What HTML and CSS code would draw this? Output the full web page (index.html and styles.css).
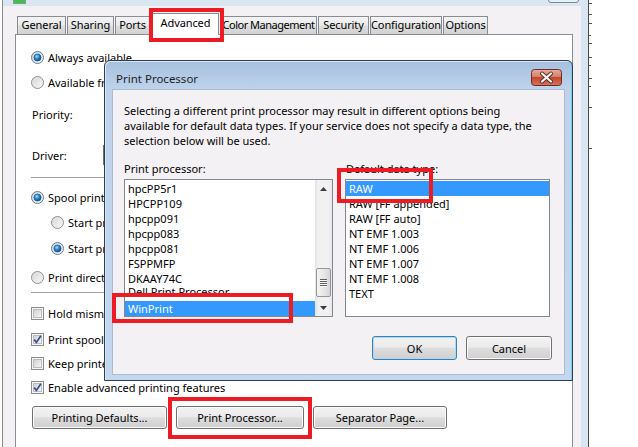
FILE: index.html
```html
<!DOCTYPE html>
<html lang="en">
<head>
<meta charset="utf-8">
<title>Printer Properties</title>
<link rel="stylesheet" href="styles.css">
</head>
<body>
<svg class="defs" width="0" height="0" aria-hidden="true">
  <defs>
    <linearGradient id="radioFill" x1="0" y1="0" x2="1" y2="1">
      <stop offset="0" stop-color="#d2d2d2"/>
      <stop offset="1" stop-color="#fcfcfc"/>
    </linearGradient>
    <radialGradient id="radioDot" cx="0.4" cy="0.35" r="0.7">
      <stop offset="0" stop-color="#9fe3ff"/>
      <stop offset="0.45" stop-color="#2a8ad4"/>
      <stop offset="1" stop-color="#0d3d73"/>
    </radialGradient>
    <linearGradient id="boxFill" x1="0" y1="0" x2="1" y2="1">
      <stop offset="0" stop-color="#cfcfcf"/>
      <stop offset="1" stop-color="#f7f7f7"/>
    </linearGradient>
    <linearGradient id="closeFill" x1="0" y1="0" x2="0" y2="1">
      <stop offset="0" stop-color="#e9ab9c"/>
      <stop offset="0.5" stop-color="#d27b66"/>
      <stop offset="0.5" stop-color="#c1472f"/>
      <stop offset="1" stop-color="#d8735a"/>
    </linearGradient>
    <symbol id="radio" viewBox="0 0 13 13">
      <circle cx="6.5" cy="6.5" r="6" fill="url(#radioFill)" stroke="#8c8e8f"/>
      <circle cx="6.5" cy="6.5" r="4.6" fill="none" stroke="#e8e8e8" stroke-width="0.8"/>
    </symbol>
    <symbol id="radio-on" viewBox="0 0 13 13">
      <circle cx="6.5" cy="6.5" r="6" fill="url(#radioFill)" stroke="#5c7c9c"/>
      <circle cx="6.5" cy="6.5" r="3.6" fill="url(#radioDot)" stroke="#174c80" stroke-width="0.6"/>
    </symbol>
    <symbol id="check" viewBox="0 0 13 13">
      <rect x="0.5" y="0.5" width="12" height="12" fill="#f5f5f5" stroke="#8e8f8f"/>
      <rect x="2.5" y="2.5" width="8" height="8" fill="url(#boxFill)" stroke="#bdbdbd"/>
    </symbol>
    <symbol id="check-on" viewBox="0 0 13 13">
      <rect x="0.5" y="0.5" width="12" height="12" fill="#f5f5f5" stroke="#8e8f8f"/>
      <rect x="2.5" y="2.5" width="8" height="8" fill="url(#boxFill)" stroke="#bdbdbd"/>
      <path d="M3.2 6.6 L5.4 9.4 L9.9 2.8" fill="none" stroke="#34508e" stroke-width="1.7"/>
    </symbol>
  </defs>
</svg>

<div class="screen">
  <div class="window">
    <div class="frame-top">
      <span class="app-icon"></span>
      <span class="close-edge"></span>
    </div>
    <div class="client">
      <div class="tabs">
        <div class="tab">General</div>
        <div class="tab">Sharing</div>
        <div class="tab">Ports</div>
        <div class="tab active">Advanced</div>
        <div class="tab">Color Management</div>
        <div class="tab">Security</div>
        <div class="tab">Configuration</div>
        <div class="tab">Options</div>
      </div>
      <div class="panel">
        <div class="row r-always"><svg class="ctl"><use href="#radio-on"/></svg><span>Always available</span></div>
        <div class="row r-from"><svg class="ctl"><use href="#radio"/></svg><span>Available from</span></div>
        <div class="row r-priority"><span class="field-label">Priority:</span></div>
        <div class="row r-driver"><span class="field-label">Driver:</span><span class="combo"></span></div>
        <div class="sep s-first"></div>
        <div class="row r-spool"><svg class="ctl"><use href="#radio-on"/></svg><span>Spool print documents so program finishes printing faster</span></div>
        <div class="row r-after sub"><svg class="ctl"><use href="#radio"/></svg><span>Start printing after last page is spooled</span></div>
        <div class="row r-now sub"><svg class="ctl"><use href="#radio-on"/></svg><span>Start printing immediately</span></div>
        <div class="row r-direct"><svg class="ctl"><use href="#radio"/></svg><span>Print directly to the printer</span></div>
        <div class="sep s-second"></div>
        <div class="row r-hold"><svg class="ctl"><use href="#check"/></svg><span>Hold mismatched documents</span></div>
        <div class="row r-first"><svg class="ctl"><use href="#check-on"/></svg><span>Print spooled documents first</span></div>
        <div class="row r-keep"><svg class="ctl"><use href="#check"/></svg><span>Keep printed documents</span></div>
        <div class="row r-enable"><svg class="ctl"><use href="#check-on"/></svg><span>Enable advanced printing features</span></div>
        <div class="panel-buttons">
          <button class="btn b-defaults">Printing Defaults...</button>
          <button class="btn b-processor">Print Processor...</button>
          <button class="btn b-separator">Separator Page...</button>
        </div>
      </div>
    </div>
  </div>
  <div class="ruler">
    <svg width="6" height="447" viewBox="0 0 6 447">
      <g stroke="#555" stroke-width="1">
        <path d="M0 3.5h3M0 14.5h3M0 23.5h3M0 35.5h2M0 43.5h3M0 57.5h3M0 65.5h2M0 78.5h3M0 86.5h2M0 107.5h3M0 148.5h3"/>
      </g>
    </svg>
  </div>
</div>

<div class="dialog">
  <div class="dlg-title">
    <span class="dlg-caption">Print Processor</span>
    <svg class="dlg-close" width="31" height="17" viewBox="0 0 31 17">
      <rect x="0.5" y="0.5" width="30" height="16" rx="3" fill="url(#closeFill)" stroke="#6e2c22"/>
      <path d="M11 4.5 L20 12.5 M20 4.5 L11 12.5" stroke="#5a2a22" stroke-width="4" stroke-linecap="round"/>
      <path d="M11 4.5 L20 12.5 M20 4.5 L11 12.5" stroke="#f4f4f4" stroke-width="2.2" stroke-linecap="round"/>
    </svg>
  </div>
  <div class="dlg-client">
    <p class="dlg-text">Selecting a different print processor may result in different options being<br>available for default data types. If your service does not specify a data type, the<br>selection below will be used.</p>
    <div class="dlg-cols">
      <div class="dlg-col col-processor">
        <div class="dlg-label">Print processor:</div>
        <div class="listbox">
          <div class="list-items">
            <div class="item">hpcPP5r1</div>
            <div class="item">HPCPP109</div>
            <div class="item">hpcpp091</div>
            <div class="item">hpcpp083</div>
            <div class="item">hpcpp081</div>
            <div class="item">FSPPMFP</div>
            <div class="item">DKAAY74C</div>
            <div class="item clipped">Dell Print Processor</div>
            <div class="item selected last">WinPrint</div>
          </div>
          <div class="scrollbar">
            <div class="sb-btn">
              <svg width="7" height="4" viewBox="0 0 7 4"><polygon points="0,4 3.5,0 7,4" fill="#3d3d3d"/></svg>
            </div>
            <div class="sb-track"><div class="sb-thumb"><span></span><span></span><span></span><span></span></div></div>
            <div class="sb-btn">
              <svg width="7" height="4" viewBox="0 0 7 4"><polygon points="0,0 7,0 3.5,4" fill="#3d3d3d"/></svg>
            </div>
          </div>
        </div>
      </div>
      <div class="dlg-col col-type">
        <div class="dlg-label">Default data type:</div>
        <div class="listbox">
          <div class="list-items">
            <div class="item selected">RAW</div>
            <div class="item">RAW [FF appended]</div>
            <div class="item">RAW [FF auto]</div>
            <div class="item">NT EMF 1.003</div>
            <div class="item">NT EMF 1.006</div>
            <div class="item">NT EMF 1.007</div>
            <div class="item">NT EMF 1.008</div>
            <div class="item">TEXT</div>
          </div>
        </div>
      </div>
    </div>
    <div class="dlg-buttons">
      <button class="btn btn-ok">OK</button>
      <button class="btn btn-cancel">Cancel</button>
    </div>
  </div>
</div>

<div class="mark mark-tab"></div>
<div class="mark mark-raw"></div>
<div class="mark mark-winprint"></div>
<div class="mark mark-button"></div>
</body>
</html>
```

FILE: styles.css
```css
* { box-sizing: border-box; }

html, body {
  margin: 0;
  padding: 0;
}

body {
  width: 638px;
  height: 447px;
  overflow: hidden;
  position: relative;
  background: #ffffff;
  font-family: "Noto Sans", "Open Sans", sans-serif;
  font-size: 11px;
  color: #000;
}

.defs { position: absolute; }

/* ---------- outer properties window ---------- */
.screen {
  display: flex;
  height: 447px;
}

.window {
  width: 587px;
  margin-left: 2px;
  border-left: 1px solid #8d8d8d;
  border-right: 1px solid #4a4a4a;
  background: #f4f1f4;
  display: flex;
  flex-direction: column;
}

.frame-top {
  height: 6px;
  background: #dbe6f3;
  position: relative;
}

.app-icon {
  position: absolute;
  left: 10px;
  top: 0;
  width: 13px;
  height: 4px;
  border: 1px solid #8a9a8a;
  border-top: none;
  background: #3fbf4f;
}

.close-edge {
  position: absolute;
  left: 545px;
  top: -1px;
  width: 31px;
  height: 4px;
  border: 1px solid #7d8898;
  border-radius: 0 0 3px 3px;
  background: #e9eef5;
}

.client {
  flex: 1;
  display: flex;
  flex-direction: column;
  padding: 0 8px 0 12px;
  border-right: 7px solid #d9e5f3;
}

/* ---------- tabs ---------- */
.tabs {
  height: 28px;
  display: flex;
  align-items: flex-end;
  padding-left: 2px;
}

.tab {
  height: 18px;
  margin-left: 1px;
  border: 1px solid #898c95;
  border-bottom: none;
  background: linear-gradient(#f3f3f3 0%, #ebebeb 45%, #dddddd 55%, #d2d2d2 100%);
  text-align: center;
  line-height: 16px;
  white-space: nowrap;
  overflow: hidden;
  letter-spacing: -0.1px;
}

.tab:nth-child(1) { width: 49px; margin-left: 0; }
.tab:nth-child(2) { width: 47px; }
.tab:nth-child(3) { width: 35px; }
.tab:nth-child(4) { width: 67px; margin-left: 2px; }
.tab:nth-child(5) { width: 97px; letter-spacing: -0.5px; }
.tab:nth-child(6) { width: 51px; }
.tab:nth-child(7) { width: 72px; }
.tab:nth-child(8) { width: 45px; }

.tab.active {
  height: 22px;
  background: #ffffff;
  margin-bottom: -1px;
  position: relative;
  z-index: 1;
  line-height: 18px;
}

/* ---------- tab page ---------- */
.panel {
  flex: 1;
  background: #ffffff;
  border: 1px solid #898c95;
  border-bottom: none;
  padding: 14px 0 0 15px;
}

.row {
  height: 16px;
  display: flex;
  align-items: center;
  gap: 4px;
  white-space: nowrap;
}

.ctl {
  width: 13px;
  height: 13px;
  flex: none;
}

.row.sub { padding-left: 20px; }

.field-label {
  width: 72px;
  padding-left: 1px;
  flex: none;
}

.combo {
  width: 300px;
  height: 20px;
  flex: none;
  margin-left: -4px;
  border: 1px solid #707070;
  background: linear-gradient(#f2f2f2, #dcdcdc);
}

.r-from { margin-top: 9px; }
.r-priority { margin-top: 16px; }
.r-driver { margin-top: 25px; }
.s-first { margin-top: 14px; }
.r-spool { margin-top: 11px; }
.r-after { margin-top: 9px; }
.r-now { margin-top: 10px; }
.r-direct { margin-top: 13px; }
.s-second { margin-top: 7px; }
.r-hold { margin-top: 12px; }
.r-first { margin-top: 10px; }
.r-keep { margin-top: 8px; }
.r-enable { margin-top: 8px; }

.sep {
  height: 1px;
  width: 520px;
  background: #a0a0a0;
}

.panel-buttons {
  margin-top: 11px;
  display: flex;
  padding-left: 1px;
}

.btn {
  height: 23px;
  padding: 0;
  border: 1px solid #707070;
  border-radius: 3px;
  background: linear-gradient(#f2f2f2 0%, #ebebeb 45%, #dddddd 52%, #cfcfcf 100%);
  box-shadow: inset 0 0 0 1px #fbfbfb;
  font-family: inherit;
  font-size: 11px;
  color: #000;
  text-align: center;
}

.b-defaults { width: 135px; }
.b-processor { width: 128px; margin-left: 9px; }
.b-separator { width: 134px; margin-left: 9px; }

/* ---------- ruler strip right of window ---------- */
.ruler {
  flex: 1;
  display: flex;
}

.ruler svg { display: block; }

/* ---------- Print Processor dialog ---------- */
.dialog {
  position: absolute;
  left: 104px;
  top: 60px;
  width: 469px;
  height: 321px;
  border: 1px solid #2f3d52;
  border-radius: 6px 6px 0 0;
  padding: 0 7px 5px;
  background: linear-gradient(#a6c0de 0px, #bed3eb 28px, #c3d7ee 100%);
  box-shadow: inset -1px 0 0 #69d3ee, inset 1px 1px 0 #d8e6f5;
  display: flex;
  flex-direction: column;
}

.dlg-title {
  height: 28px;
  display: flex;
  justify-content: space-between;
  align-items: flex-start;
  padding: 0 3px 0 4px;
}

.dlg-caption {
  margin-top: 10px;
  line-height: 15px;
  font-size: 11.5px;
  color: #1e1e1e;
}

.dlg-close {
  margin-top: 8px;
  display: block;
}

.dlg-client {
  flex: 1;
  background: #f4f1f4;
  border: 1px solid #aabbd3;
  padding: 13px 12px 0 11px;
}

.dlg-text {
  margin: 0;
  line-height: 15px;
  white-space: nowrap;
}

.dlg-cols {
  margin-top: 13px;
  display: flex;
  gap: 12px;
}

.col-processor { width: 209px; }
.col-type { width: 205px; }

.dlg-label {
  line-height: 15px;
  white-space: nowrap;
}

.col-type .dlg-label { padding-left: 1px; }

.listbox {
  margin-top: 3px;
  height: 138px;
  border: 1px solid #828790;
  background: #ffffff;
  display: flex;
}

.list-items {
  flex: 1;
  padding-top: 1px;
  overflow: hidden;
}

.item {
  height: 15px;
  line-height: 15px;
  padding-left: 3px;
  white-space: nowrap;
  overflow: hidden;
}

.item.clipped {
  height: 8px;
  line-height: 11px;
}

.item.last { margin-top: 7px; }

.item.selected {
  background: #3399ff;
  color: #ffffff;
}

.scrollbar {
  width: 17px;
  display: flex;
  flex-direction: column;
  background: linear-gradient(90deg, #e3e3e3 0%, #f1f1f1 20%, #f1f1f1 80%, #e7e7e7 100%);
}

.sb-btn {
  height: 17px;
  display: flex;
  align-items: center;
  justify-content: center;
}

.sb-btn svg { display: block; }

.sb-track {
  flex: 1;
  display: flex;
  flex-direction: column;
  justify-content: flex-end;
  padding: 0 1px 2px;
}

.sb-thumb {
  height: 29px;
  border: 1px solid #979797;
  border-radius: 2px;
  background: linear-gradient(90deg, #f4f4f4 0%, #e8e8e8 50%, #d6d6d6 100%);
  display: flex;
  flex-direction: column;
  align-items: center;
  justify-content: center;
  gap: 1px;
}

.sb-thumb span {
  width: 7px;
  height: 1px;
  background: #5e5e5e;
  box-shadow: 0 1px 0 #fafafa;
}

.dlg-buttons {
  margin-top: 19px;
  display: flex;
  justify-content: flex-end;
  gap: 9px;
}

.btn-ok {
  width: 85px;
  height: 24px;
  border-color: #3c7fb1;
  box-shadow: inset 0 0 0 1px #a8dcf6;
}

.btn-cancel {
  width: 86px;
  height: 24px;
}

/* ---------- red annotation frames ---------- */
.mark {
  position: absolute;
  border: 4px solid #ed1c24;
  z-index: 5;
}

.mark-tab { left: 149px; top: 8px; width: 75px; height: 34px; }
.mark-raw { left: 337px; top: 168px; width: 96px; height: 35px; }
.mark-winprint { left: 112px; top: 293px; width: 181px; height: 30px; }
.mark-button { left: 168px; top: 397px; width: 144px; height: 42px; }
```
